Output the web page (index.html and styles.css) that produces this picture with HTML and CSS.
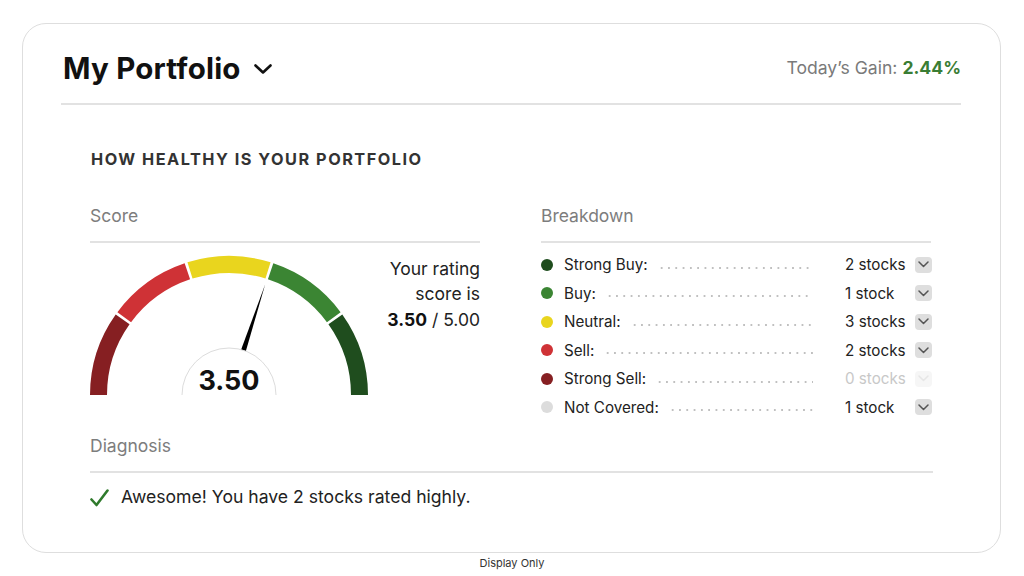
FILE: index.html
```html
<!DOCTYPE html>
<html lang="en">
<head>
<meta charset="utf-8">
<title>My Portfolio</title>
<link rel="stylesheet" href="styles.css">
</head>
<body>
<div class="card">
  <header class="card-header">
    <h1 class="title">My Portfolio
      <svg class="title-chevron" width="20" height="14" viewBox="0 0 20 14"><path d="M2.5 3.5 L10 10.5 L17.5 3.5" fill="none" stroke="#111" stroke-width="2.6" stroke-linecap="round" stroke-linejoin="round"/></svg>
    </h1>
    <div class="gain">Today’s Gain: <strong>2.44%</strong></div>
  </header>

  <section class="health">
    <h2 class="section-title">HOW HEALTHY IS YOUR PORTFOLIO</h2>
    <div class="columns">
      <div class="col">
        <div class="col-label">Score</div>
        <div class="score-row">
          <svg class="gauge" width="280" height="141" viewBox="0 0 280 141">
            <path d="M9.5 141 A130.5 130.5 0 0 1 33.63 65.40" fill="none" stroke="#861f22" stroke-width="17"/>
            <path d="M35.23 63.20 A130.5 130.5 0 0 1 98.37 17.31" fill="none" stroke="#cf3236" stroke-width="17"/>
            <path d="M100.98 16.48 A130.5 130.5 0 0 1 179.02 16.48" fill="none" stroke="#e9d51e" stroke-width="17"/>
            <path d="M181.63 17.31 A130.5 130.5 0 0 1 244.77 63.20" fill="none" stroke="#3b8533" stroke-width="17"/>
            <path d="M246.37 65.40 A130.5 130.5 0 0 1 270.5 141" fill="none" stroke="#1f4d1e" stroke-width="17"/>
            <polygon points="156.6,98.1 151.8,96.5 176.2,30.2" fill="#000"/>
            <circle cx="140" cy="141" r="47" fill="#fff" stroke="#dcdcdc" stroke-width="1"/>
            <text x="140" y="135.5" text-anchor="middle" class="gauge-value">3.50</text>
          </svg>
          <div class="rating">Your rating<br>score is<br><strong>3.50</strong> / 5.00</div>
        </div>
      </div>
      <div class="col">
        <div class="col-label">Breakdown</div>
        <ul class="breakdown">
          <li class="brow"><span class="dot dot-sb"></span><span class="blabel">Strong Buy:</span><span class="leader"></span><span class="count">2 stocks</span><span class="btn"><svg width="11" height="7" viewBox="0 0 11 7"><path d="M1 1 L5.5 5.5 L10 1" fill="none" stroke="#555" stroke-width="1.5" stroke-linecap="round" stroke-linejoin="round"/></svg></span></li>
          <li class="brow"><span class="dot dot-b"></span><span class="blabel">Buy:</span><span class="leader"></span><span class="count">1 stock</span><span class="btn"><svg width="11" height="7" viewBox="0 0 11 7"><path d="M1 1 L5.5 5.5 L10 1" fill="none" stroke="#555" stroke-width="1.5" stroke-linecap="round" stroke-linejoin="round"/></svg></span></li>
          <li class="brow"><span class="dot dot-n"></span><span class="blabel">Neutral:</span><span class="leader"></span><span class="count">3 stocks</span><span class="btn"><svg width="11" height="7" viewBox="0 0 11 7"><path d="M1 1 L5.5 5.5 L10 1" fill="none" stroke="#555" stroke-width="1.5" stroke-linecap="round" stroke-linejoin="round"/></svg></span></li>
          <li class="brow"><span class="dot dot-s"></span><span class="blabel">Sell:</span><span class="leader"></span><span class="count">2 stocks</span><span class="btn"><svg width="11" height="7" viewBox="0 0 11 7"><path d="M1 1 L5.5 5.5 L10 1" fill="none" stroke="#555" stroke-width="1.5" stroke-linecap="round" stroke-linejoin="round"/></svg></span></li>
          <li class="brow is-empty"><span class="dot dot-ss"></span><span class="blabel">Strong Sell:</span><span class="leader"></span><span class="count">0 stocks</span><span class="btn"><svg width="11" height="7" viewBox="0 0 11 7"><path d="M1 1 L5.5 5.5 L10 1" fill="none" stroke="#e6e6e6" stroke-width="1.5" stroke-linecap="round" stroke-linejoin="round"/></svg></span></li>
          <li class="brow"><span class="dot dot-nc"></span><span class="blabel">Not Covered:</span><span class="leader"></span><span class="count">1 stock</span><span class="btn"><svg width="11" height="7" viewBox="0 0 11 7"><path d="M1 1 L5.5 5.5 L10 1" fill="none" stroke="#555" stroke-width="1.5" stroke-linecap="round" stroke-linejoin="round"/></svg></span></li>
        </ul>
      </div>
    </div>

    <div class="col-label diag-label">Diagnosis</div>
    <p class="diag"><svg class="check" width="19" height="18" viewBox="0 0 19 18"><path d="M1.5 10.5 L6.5 16 L17.5 1.5" fill="none" stroke="#2f7a2c" stroke-width="2.6" stroke-linecap="round" stroke-linejoin="round"/></svg>Awesome! You have 2 stocks rated highly.</p>
  </section>
</div>
<div class="footnote">Display Only</div>
</body>
</html>
```

FILE: styles.css
```css
* { box-sizing: border-box; }
html, body { margin: 0; padding: 0; background: #fff; }
body {
  font-family: Inter, "Noto Sans", "Liberation Sans", sans-serif;
  color: #222;
}
.card {
  margin: 23px 0 0 22px;
  width: 979px;
  height: 530px;
  border: 1.5px solid #dedede;
  border-radius: 24px;
  padding: 0 39px 0 38px;
}
.card-header {
  display: flex;
  align-items: center;
  justify-content: space-between;
  height: 81px;
  padding-top: 8px;
  border-bottom: 2px solid #e2e2e2;
}
.title {
  margin: 0 0 0 2px;
  font-size: 29.5px;
  font-weight: 700;
  color: #111;
  display: flex;
  align-items: center;
  gap: 12px;
  letter-spacing: 0.2px;
}
.title-chevron { margin-top: 2px; }
.gain {
  font-size: 17.6px;
  color: #7a7a7a;
}
.gain strong { color: #3a7d34; font-weight: 700; }

.health { padding: 0 28px 0 29px; }
.section-title {
  margin: 44px 0 0 1px;
  font-size: 16.3px;
  line-height: 20px;
  font-weight: 700;
  letter-spacing: 1.5px;
  color: #333;
}
.columns {
  display: grid;
  grid-template-columns: 390px 390px;
  column-gap: 61px;
  margin-top: 36px;
}
.col-label {
  font-size: 17.5px;
  line-height: 22px;
  color: #7d7d7d;
  padding-bottom: 14px;
  border-bottom: 2px solid #e2e2e2;
}
.score-row {
  display: flex;
  justify-content: space-between;
  margin-top: 11px;
}
.gauge { display: block; margin-left: -1px; }
.gauge-value {
  font-family: Inter, "Liberation Sans", sans-serif;
  font-size: 27px;
  font-weight: 700;
  fill: #111;
}
.rating {
  text-align: right;
  font-size: 17.5px;
  line-height: 25.5px;
  color: #222;
  margin-top: 1.5px;
}
.rating strong { font-weight: 700; color: #111; }

.breakdown {
  list-style: none;
  margin: 7.5px 0 0 0;
  padding: 0;
}
.brow {
  display: flex;
  align-items: center;
  height: 28.5px;
  font-size: 15.2px;
  color: #222;
}
.dot {
  width: 12px;
  height: 12px;
  border-radius: 50%;
  flex: none;
  margin-right: 11px;
}
.dot-sb { background: #1f4d1e; }
.dot-b { background: #3b8533; }
.dot-n { background: #e9d51e; }
.dot-s { background: #cf3236; }
.dot-ss { background: #861f22; }
.dot-nc { background: #dcdcdc; }
.blabel { flex: none; }
.leader {
  flex: 1;
  height: 4px;
  margin: 6px 32px 0 10px;
  background-image: radial-gradient(circle, #c0c0c0 0.9px, transparent 1.2px);
  background-size: 7.3px 4px;
  background-repeat: repeat-x;
}
.count {
  flex: none;
  width: 70px;
}
.btn {
  flex: none;
  width: 17px;
  height: 16px;
  margin-right: -1px;
  border-radius: 4px;
  background: #dedede;
  display: flex;
  align-items: center;
  justify-content: center;
}
.is-empty .count { color: #c8c8c8; }
.is-empty .btn { background: #f6f6f6; }

.diag-label { margin-top: 13px; }
.diag {
  margin: 13.5px 0 0 0;
  font-size: 17.6px;
  line-height: 22px;
  color: #222;
  display: flex;
  align-items: center;
}
.check {
  flex: none;
  margin: 2px 12px 0 0;
}
.footnote {
  text-align: center;
  font-size: 11px;
  line-height: 14px;
  color: #333;
  margin-top: 3px;
}
```
